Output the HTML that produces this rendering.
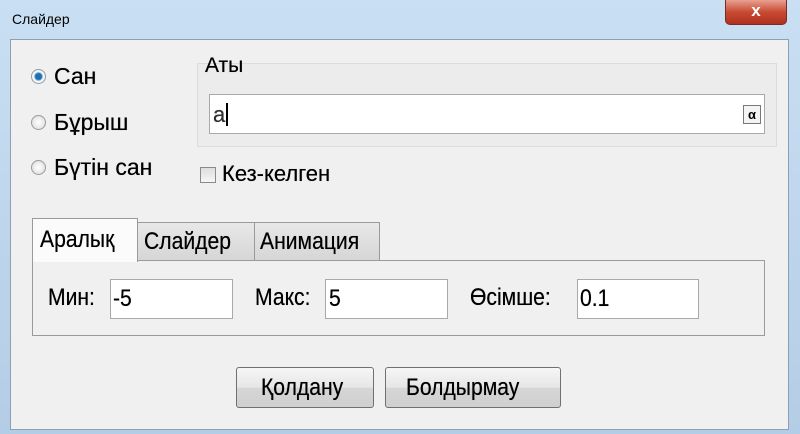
<!DOCTYPE html>
<html><head><meta charset="utf-8"><style>
body{margin:0;width:800px;height:434px;overflow:hidden;font-family:"Liberation Sans",sans-serif;background:linear-gradient(#c9dff3,#b4cde6);position:relative}
.a{position:absolute}
.t{position:absolute;color:#000;white-space:nowrap;line-height:1;text-shadow:0 0 0.4px #000}
.n{transform:scaleX(0.88);transform-origin:0 0}
.client{left:10px;top:39px;width:777px;height:389px;background:#f0f0f0;border:1px solid #8d9fb2}
.inp{background:#fff;border:1px solid #a9a9a9;box-sizing:border-box}
.radio{width:15px;height:15px;border-radius:50%;border:1px solid #9a9a9a;background:radial-gradient(#fff,#d8d8d8);box-sizing:border-box}
.btn{border:1px solid #707070;border-radius:3px;background:linear-gradient(#f6f6f6 0%,#e6e6e6 50%,#d6d6d6 51%,#cfcfcf);box-sizing:border-box}
.tab{border:1px solid #9a9a9a;border-bottom:none;box-sizing:border-box;background:linear-gradient(#e8e8e8,#d6d6d6)}
</style></head><body>
<div class="t" style="left:12px;top:12px;font-size:14px;text-shadow:none">Слайдер</div>
<div class="a" style="left:725px;top:0;width:62px;height:25px;border:1px solid #7a2a20;border-top:none;border-radius:0 0 5px 5px;background:linear-gradient(#e8a090,#c84a32 50%,#b0321e);box-sizing:border-box;color:#fff;font-weight:bold;font-size:17px;text-align:center;line-height:22px">x</div>
<div class="a client"></div>
<div class="a" style="left:197px;top:63px;width:580px;height:84px;border:1px solid #dcdcdc;box-sizing:border-box;background:#ececec"></div>
<div class="t" style="left:205px;top:55px;font-size:21px">Аты</div>
<div class="a inp" style="left:209px;top:94px;width:556px;height:40px"></div>
<div class="t" style="left:213px;top:104px;font-size:22px;color:#333">a</div>
<div class="a" style="left:226px;top:103px;width:2px;height:23px;background:#000"></div>
<div class="a" style="left:743px;top:105px;width:18px;height:19px;border:1px solid #777;box-sizing:border-box;font-size:13px;font-weight:bold;text-align:center;line-height:17px;background:#f4f4f4">α</div>
<div class="a radio" style="left:31px;top:69px;background:radial-gradient(#1e6fb0 0 3px,#8fc0e6 4px,#fff 5px,#d8d8d8)"></div>
<div class="t" style="left:54px;top:65px;font-size:23px">Сан</div>
<div class="a radio" style="left:31px;top:115px"></div>
<div class="t" style="left:54px;top:111px;font-size:23px">Бұрыш</div>
<div class="a radio" style="left:31px;top:160px"></div>
<div class="t" style="left:54px;top:156px;font-size:23px">Бүтін сан</div>
<div class="a" style="left:200px;top:167px;width:16px;height:16px;border:1px solid #8a8a8a;box-sizing:border-box;background:linear-gradient(#ddd,#f6f6f6)"></div>
<div class="t" style="left:222px;top:163px;font-size:22px">Кез-келген</div>
<div class="a" style="left:32px;top:260px;width:733px;height:76px;border:1px solid #9a9a9a;box-sizing:border-box"></div>
<div class="a tab" style="left:137px;top:222px;width:118px;height:38px"></div>
<div class="t n" style="left:144px;top:230px;font-size:24px">Слайдер</div>
<div class="a tab" style="left:254px;top:222px;width:126px;height:38px"></div>
<div class="t n" style="left:260px;top:230px;font-size:24px">Анимация</div>
<div class="a tab" style="left:32px;top:218px;width:106px;height:44px;background:#fbfbfb"></div>
<div class="t n" style="left:40px;top:228px;font-size:24px">Аралық</div>
<div class="t n" style="left:48px;top:286px;font-size:24px">Мин:</div>
<div class="a inp" style="left:110px;top:279px;width:123px;height:40px"></div>
<div class="t n" style="left:113px;top:287px;font-size:24px">-5</div>
<div class="t n" style="left:255px;top:286px;font-size:24px">Макс:</div>
<div class="a inp" style="left:325px;top:279px;width:123px;height:40px"></div>
<div class="t n" style="left:329px;top:287px;font-size:24px">5</div>
<div class="t n" style="left:470px;top:286px;font-size:24px">Өсімше:</div>
<div class="a inp" style="left:577px;top:279px;width:122px;height:40px"></div>
<div class="t n" style="left:580px;top:287px;font-size:24px">0.1</div>
<div class="a btn" style="left:236px;top:367px;width:138px;height:41px"></div>
<div class="t n" style="left:261px;top:376px;font-size:24px">Қолдану</div>
<div class="a btn" style="left:385px;top:367px;width:176px;height:41px"></div>
<div class="t n" style="left:406px;top:376px;font-size:24px">Болдырмау</div>
</body></html>
